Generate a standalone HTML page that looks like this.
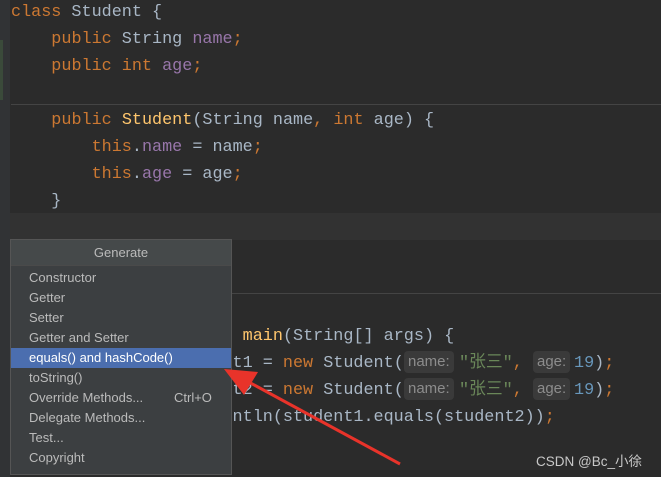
<!DOCTYPE html>
<html><head><meta charset="utf-8"><style>
body{margin:0;width:661px;height:477px;background:#2b2b2b;overflow:hidden;position:relative;font-family:"Liberation Mono",monospace;}
.l{position:absolute;left:11px;font-size:16.8px;line-height:27px;height:27px;white-space:pre;color:#a9b7c6;margin-top:1px;}
.k{color:#cc7832}.f{color:#9876aa}.m{color:#ffc66d}.s{color:#6a8759}.n{color:#6897bb}
.h{position:absolute;font-family:"Liberation Sans",sans-serif;font-size:15px;color:#8c8c8c;background:#3a3a3a;border-radius:4px;height:22px;line-height:22px;padding:0 4px;}
.pop{position:absolute;left:10px;top:239px;width:222px;height:236px;background:#3c3f41;border:1px solid #555;box-sizing:border-box;font-family:"Liberation Sans",sans-serif;font-size:13px;color:#bbbbbb;}
.hd{height:25px;line-height:25px;text-align:center;background:#45494a;border-bottom:1px solid #4a4a4a;}
.it{position:absolute;left:0;width:220px;height:20px;line-height:20px;padding-left:18px;box-sizing:border-box;}
</style></head><body>
<div style="position:absolute;left:0;top:0;width:10px;height:477px;background:#313335"></div>
<div style="position:absolute;left:0;top:40px;width:3px;height:60px;background:#3a4a3a"></div>
<div style="position:absolute;left:10px;top:213px;width:651px;height:27px;background:#323232"></div>
<div style="position:absolute;left:11px;top:104px;width:650px;height:1px;background:#444"></div>
<div style="position:absolute;left:11px;top:293px;width:650px;height:1px;background:#444"></div>
<div class="l" style="top:-2px"><span class="k">class</span> Student {</div>
<div class="l" style="top:25px">    <span class="k">public</span> String <span class="f">name</span><span class="k">;</span></div>
<div class="l" style="top:52px">    <span class="k">public int</span> <span class="f">age</span><span class="k">;</span></div>
<div class="l" style="top:106px">    <span class="k">public</span> <span class="m">Student</span>(String name<span class="k">,</span> <span class="k">int</span> age) {</div>
<div class="l" style="top:133px">        <span class="k">this</span>.<span class="f">name</span> = name<span class="k">;</span></div>
<div class="l" style="top:160px">        <span class="k">this</span>.<span class="f">age</span> = age<span class="k">;</span></div>
<div class="l" style="top:187px">    }</div>
<div class="l" style="top:322px">    <span class="k">public static void</span> <span class="m">main</span>(String[] args) {</div>
<div class="l" style="top:349px">        Student student1 = <span class="k">new</span> Student(</div>
<div class="h" style="left:404px;top:351px">name:</div>
<div class="l" style="top:349px;left:459px"><span class="s">"张三"</span><span class="k">,</span></div>
<div class="h" style="left:533px;top:351px">age:</div>
<div class="l" style="top:349px;left:574px"><span class="n">19</span>)<span class="k">;</span></div>
<div class="l" style="top:376px">        Student student2 = <span class="k">new</span> Student(</div>
<div class="h" style="left:404px;top:378px">name:</div>
<div class="l" style="top:376px;left:459px"><span class="s">"张三"</span><span class="k">,</span></div>
<div class="h" style="left:533px;top:378px">age:</div>
<div class="l" style="top:376px;left:574px"><span class="n">19</span>)<span class="k">;</span></div>
<div class="l" style="top:403px">        System.out.println(student1.equals(student2))<span class="k">;</span></div>
<div class="pop">
<div class="hd">Generate</div>
<div class="it" style="top:28px">Constructor</div>
<div class="it" style="top:48px">Getter</div>
<div class="it" style="top:68px">Setter</div>
<div class="it" style="top:88px">Getter and Setter</div>
<div class="it" style="top:108px;background:#4b6eaf;color:#fff">equals() and hashCode()</div>
<div class="it" style="top:128px">toString()</div>
<div class="it" style="top:148px">Override Methods...<span style="position:absolute;left:163px">Ctrl+O</span></div>
<div class="it" style="top:168px">Delegate Methods...</div>
<div class="it" style="top:188px">Test...</div>
<div class="it" style="top:208px">Copyright</div>
</div>
<svg style="position:absolute;left:0;top:0" width="661" height="477">
<line x1="400" y1="464" x2="245" y2="380" stroke="#e8332a" stroke-width="3"/>
<polygon points="224,369 258,372 244,395" fill="#e8332a"/>
</svg>
<div style="position:absolute;left:536px;top:450px;font-family:'Liberation Sans','Noto Sans CJK SC',sans-serif;font-size:13.5px;color:#c8c8c8">CSDN @Bc_小徐</div>
</body></html>
